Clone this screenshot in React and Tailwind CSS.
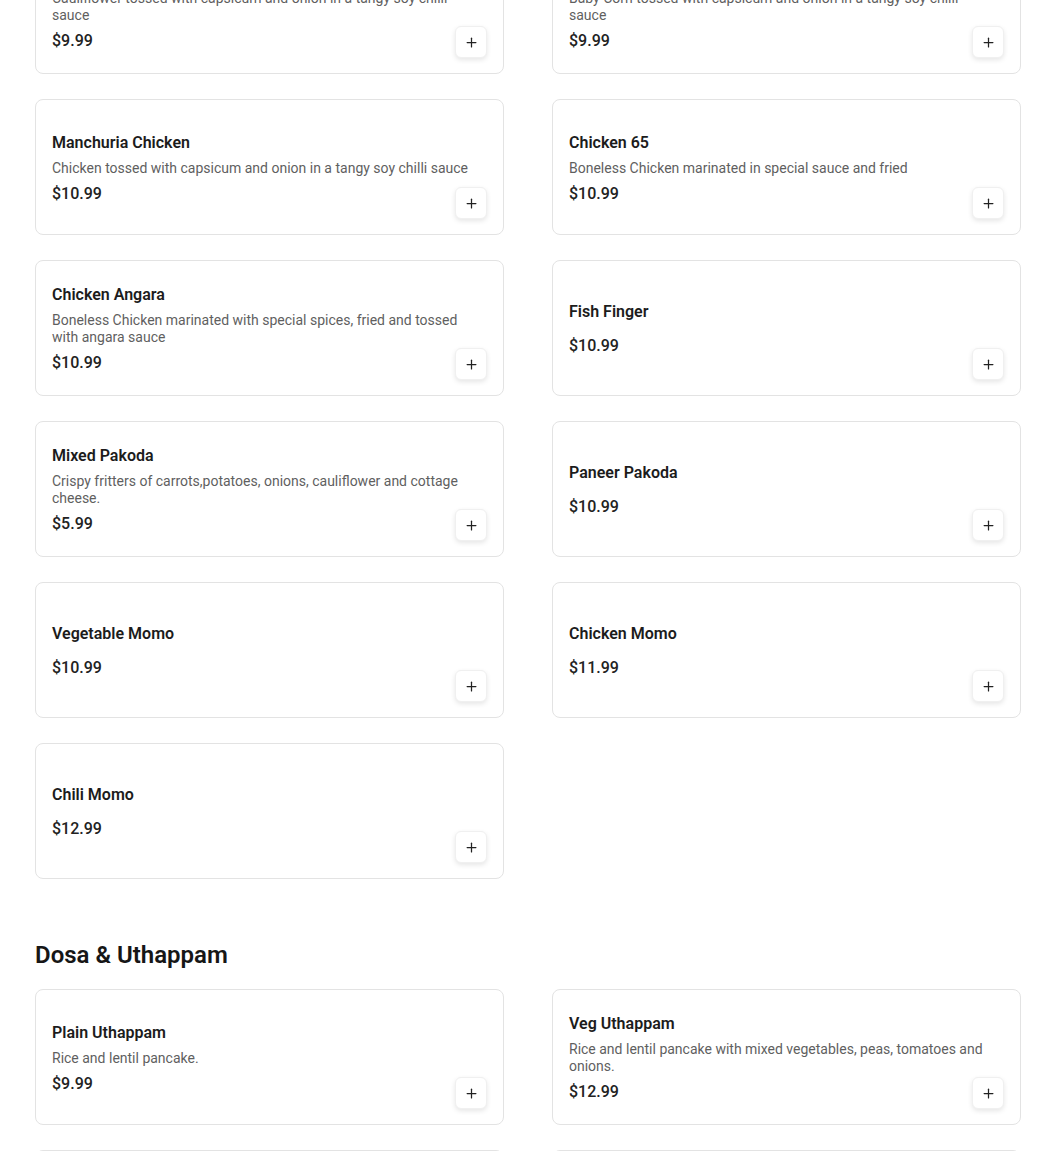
import { Plus } from "lucide-react";

const appetizers = [
    { name: "Gobi Manchurian", desc: "Cauliflower tossed with capsicum and onion in a tangy soy chilli sauce", price: "$9.99" },
    { name: "Baby Corn Manchurian", desc: "Baby Corn tossed with capsicum and onion in a tangy soy chilli sauce", price: "$9.99" },
    { name: "Manchuria Chicken", desc: "Chicken tossed with capsicum and onion in a tangy soy chilli sauce", price: "$10.99" },
    { name: "Chicken 65", desc: "Boneless Chicken marinated in special sauce and fried", price: "$10.99" },
    { name: "Chicken Angara", desc: "Boneless Chicken marinated with special spices, fried and tossed with angara sauce", price: "$10.99" },
    { name: "Fish Finger", desc: "", price: "$10.99" },
    { name: "Mixed Pakoda", desc: "Crispy fritters of carrots,potatoes, onions, cauliflower and cottage cheese.", price: "$5.99" },
    { name: "Paneer Pakoda", desc: "", price: "$10.99" },
    { name: "Vegetable Momo", desc: "", price: "$10.99" },
    { name: "Chicken Momo", desc: "", price: "$11.99" },
    { name: "Chili Momo", desc: "", price: "$12.99" },
];

const dosa = [
    { name: "Plain Uthappam", desc: "Rice and lentil pancake.", price: "$9.99" },
    { name: "Veg Uthappam", desc: "Rice and lentil pancake with mixed vegetables, peas, tomatoes and onions.", price: "$12.99" },
    { name: "Onion Uthappam", desc: "Rice and lentil pancake with onions.", price: "$10.99" },
    { name: "Masala Dosa", desc: "Crispy crepe filled with spiced potatoes.", price: "$11.99" },
];

const MenuCard = ({ item }) => {
    return (
        <div className="relative h-[136px] bg-white border border-[#e3e3e3] rounded-lg pl-4 pr-8 pt-0.5 flex flex-col justify-center">
            <h3 className="text-base leading-6 font-semibold text-[#1c1c1c]">{item.name}</h3>
            <p className="my-[5px] text-sm leading-[17px] text-[#5f5f5f]">{item.desc}</p>
            <p className="text-base leading-6 font-medium text-[#222]">{item.price}</p>

            {/* Add button */}
            <button className="absolute right-4 bottom-[15px] w-8 h-8 flex items-center justify-center bg-white rounded-md border border-[#f0f0f0] shadow-[0_2px_5px_rgba(0,0,0,0.1)]">
                <Plus size={15} strokeWidth={2} className="text-[#222]" />
            </button>
        </div>
    );
};

export default function App() {
    return (
        <div className="min-h-screen bg-white font-['Roboto',sans-serif] pl-[35px] overflow-hidden">
            <div className="w-[986px] -mt-[62px]">
                <div className="grid grid-cols-2 gap-x-12 gap-y-[25px]">
                    {appetizers.map((item) => (
                        <MenuCard key={item.name} item={item} />
                    ))}
                </div>

                <h2 className="mt-[60px] mb-[18px] text-2xl leading-8 font-semibold text-[#161616]">
                    Dosa &amp; Uthappam
                </h2>
                <div className="grid grid-cols-2 gap-x-12 gap-y-[25px]">
                    {dosa.map((item) => (
                        <MenuCard key={item.name} item={item} />
                    ))}
                </div>
            </div>
        </div>
    );
}
